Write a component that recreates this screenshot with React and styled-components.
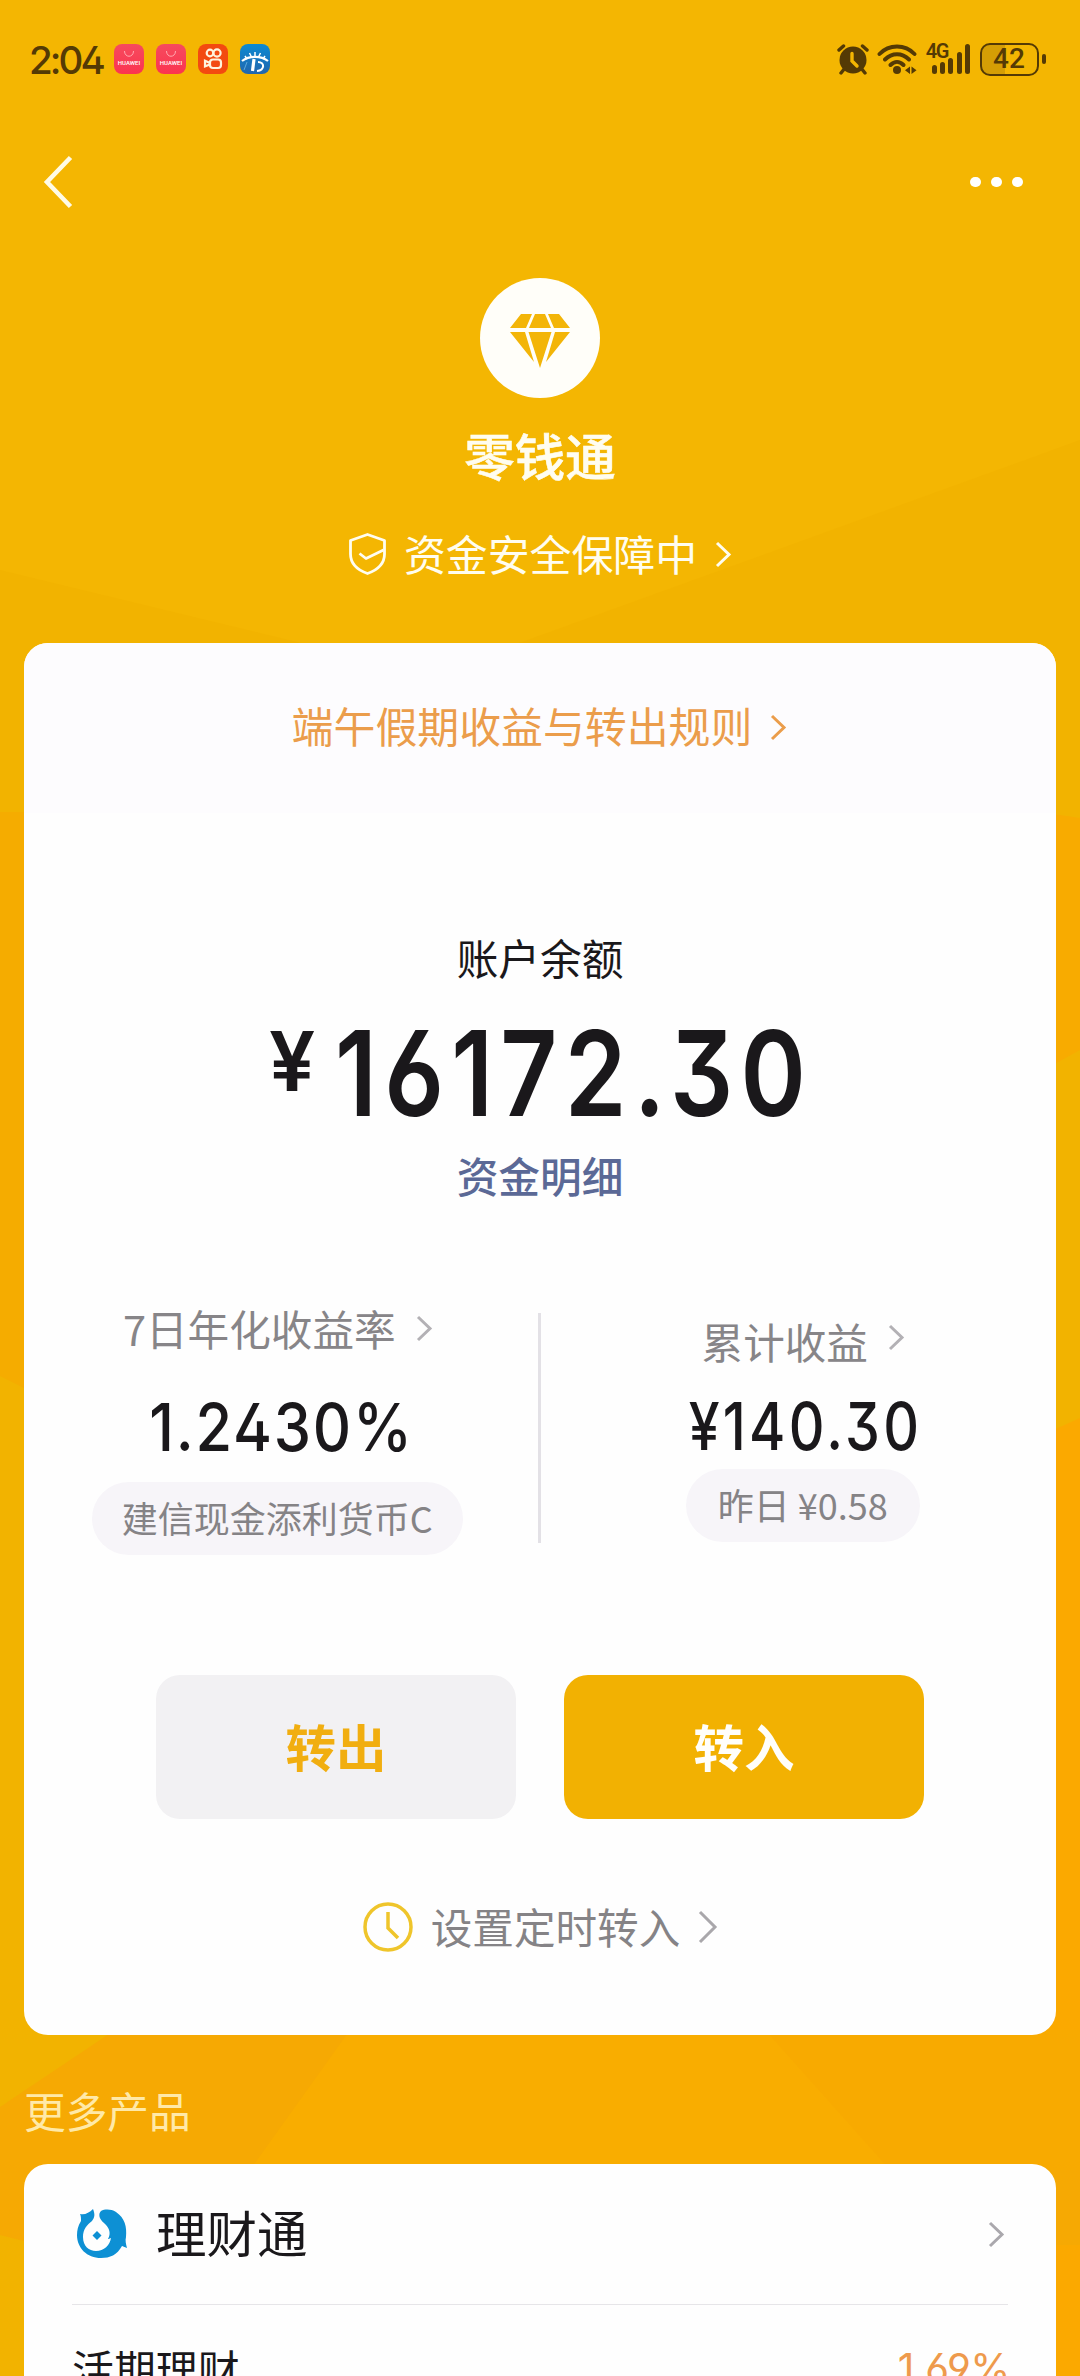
import React from "react";
import styled, { createGlobalStyle } from "styled-components";

const cjk = `"Noto Sans CJK SC", sans-serif`;
const digits = `Inter, "Noto Sans CJK SC", sans-serif`;

const GlobalStyle = createGlobalStyle`
  *, *::before, *::after { box-sizing: border-box; }
  body { margin: 0; background: #f4b602; font-family: ${cjk}; overflow: hidden; }
`;

const Screen = styled.main`
  position: relative;
  isolation: isolate;
  width: 1080px;
  height: 2376px;
  overflow: hidden;
  display: flex;
  flex-direction: column;
  color: #1a181b;
`;

const Backdrop = styled.svg`
  position: absolute;
  inset: 0;
  z-index: -1;
`;

const StatusBar = styled.header`
  display: flex;
  flex: none;
  align-items: center;
  height: 118px;
  padding: 0 34px 0 30px;
  color: #543a05;
`;

const Time = styled.span`
  font-family: ${digits};
  font-size: 38.5px;
  font-weight: 500;
  line-height: 40px;
  width: 85px;
  margin-left: -1px;
  padding-top: 2px;
  letter-spacing: -2.9px;
  font-feature-settings: "cv02";
  white-space: nowrap;
`;

const AppIcons = styled.div`
  display: flex;
  gap: 12px;
`;

const AppIcon = styled.div`
  display: flex;
  flex-direction: column;
  align-items: center;
  justify-content: center;
  width: 30px;
  height: 30px;
  border-radius: 8px;
  overflow: hidden;
  color: #fff;
  background: ${(p) => p.$bg};
`;

const BrandLabel = styled.span`
  font: 500 6px/8px Roboto, sans-serif;
  margin-top: 1px;
`;

const StatusIcons = styled.div`
  display: flex;
  align-items: center;
  margin-left: auto;
`;

const WifiIcon = styled.svg`
  margin-left: 8px;
`;

const Signal = styled.div`
  display: flex;
  align-items: flex-end;
  position: relative;
  gap: 3.3px;
  height: 30px;
  margin: 0 10px 0 15px;
`;

const Network = styled.span`
  position: absolute;
  left: -6px;
  top: -2px;
  font: 600 20px/18px Roboto, sans-serif;
  letter-spacing: -1.6px;
`;

const Bar = styled.i`
  width: 5px;
  height: ${(p) => p.$h}px;
  border-radius: 2.5px;
  background: currentColor;
`;

const Battery = styled.div`
  display: flex;
  align-items: center;
  justify-content: center;
  width: 59px;
  height: 33px;
  border: 2.5px solid currentColor;
  border-radius: 10px;
  background: linear-gradient(90deg, #d59e05 42%, transparent 42%);
  font: 500 28px/28px Roboto, sans-serif;
  padding-right: 1px;
`;

const BatteryTip = styled.i`
  width: 4px;
  height: 10px;
  margin-left: 3px;
  border-radius: 2px;
  background: currentColor;
`;

const NavBar = styled.nav`
  display: flex;
  flex: none;
  align-items: center;
  justify-content: space-between;
  height: 128px;
  padding: 0 57px 0 43px;
`;

const Dots = styled.div`
  display: flex;
  gap: 10.4px;
`;

const Dot = styled.i`
  width: 10.6px;
  height: 10.6px;
  border-radius: 50%;
  background: #fff;
`;

const Hero = styled.section`
  display: flex;
  flex: none;
  flex-direction: column;
  align-items: center;
  height: 397px;
  padding-top: 32px;
  color: #fffdf0;
`;

const Emblem = styled.div`
  display: flex;
  align-items: center;
  justify-content: center;
  width: 120px;
  height: 120px;
  padding-top: 5px;
  border-radius: 50%;
  background: #fffef9;
`;

const Title = styled.h1`
  margin: 20px 0 0;
  font-size: 50.5px;
  font-weight: 500;
  line-height: 72px;
  -webkit-text-stroke: 0.6px currentColor;
`;

const SafetyLink = styled.div`
  display: flex;
  align-items: center;
  height: 60px;
  margin-top: 34px;
  font-size: 41.9px;
  line-height: 60px;
`;

const SafetyText = styled.span`
  margin: 0 19px 3px 18px;
`;

const Card = styled.section`
  display: flex;
  flex-direction: column;
  align-items: center;
  flex: none;
  width: 1032px;
  height: ${(p) => p.$h}px;
  margin: 0 auto;
  border-radius: 24px;
  background: #fefefe;
  overflow: hidden;
`;

const Notice = styled.div`
  display: flex;
  align-items: center;
  justify-content: center;
  gap: 19px;
  width: 100%;
  height: 170px;
  padding: 0 2px 2px 0;
  background: #fdfcfe;
  color: #eb9d4b;
  font-size: 41.9px;
`;

const NoticeText = styled.span`
  margin-bottom: 4px;
  line-height: 60px;
`;

const BalanceLabel = styled.div`
  margin-top: 114px;
  font-size: 41.7px;
  line-height: 60px;
`;

const Balance = styled.div`
  display: flex;
  align-items: flex-start;
  width: 100%;
  height: 110px;
  margin-top: 31px;
  padding-left: 245px;
  font-family: ${digits};
  font-weight: 600;
`;

const Yen = styled.span`
  flex: none;
  width: 66px;
  font-size: 82px;
  line-height: 88px;
`;

const Amount = styled.span`
  font-size: 118px;
  line-height: 110px;
  letter-spacing: 8.6px;
  font-feature-settings: "cv03", "cv04", "cv09";
  transform: scaleX(0.84);
  transform-origin: left;
`;

const DetailLink = styled.a`
  margin-top: 17px;
  color: #5b6996;
  font-size: 41.7px;
  font-weight: 500;
  line-height: 60px;
`;

const Stats = styled.div`
  display: flex;
  width: 100%;
  height: 230px;
  margin-top: 108px;
`;

const Stat = styled.div`
  display: flex;
  flex: 1;
  flex-direction: column;
  align-items: center;
  padding: ${(p) => p.$pad};
`;

const Divider = styled.i`
  width: 3px;
  height: 230px;
  background: #e3e1e6;
`;

const StatLabel = styled.div`
  display: flex;
  align-items: center;
  gap: 21px;
  height: 60px;
  margin-top: ${(p) => p.$top}px;
  color: #878588;
  font-size: 41.6px;
  line-height: 60px;

  svg {
    margin-bottom: ${(p) => p.$lift || 0}px;
  }
`;

const StatValue = styled.div`
  height: 70px;
  margin-top: ${(p) => p.$top}px;
  padding-left: ${(p) => p.$shift}px;
  font-family: ${digits};
  font-size: 66px;
  line-height: 70px;
  white-space: nowrap;
  font-weight: ${(p) => p.$weight};
  letter-spacing: ${(p) => p.$spacing}px;
  font-feature-settings: ${(p) => p.$features};
  transform: scaleX(${(p) => p.$sx});
`;

const Pill = styled.div`
  flex: none;
  width: ${(p) => p.$w}px;
  height: 73px;
  margin-top: ${(p) => p.$top}px;
  border-radius: 37px;
  background: #f7f5f9;
  color: #858386;
  font-size: 36px;
  line-height: 71px;
  text-align: center;
  white-space: nowrap;
`;

const Actions = styled.div`
  display: flex;
  gap: 48px;
  margin-top: 132px;
`;

const Button = styled.button`
  width: 360px;
  height: 144px;
  border: 0;
  border-radius: 24px;
  padding: 0 0 4px;
  background: ${(p) => (p.$primary ? "#f2b102" : "#f2f1f3")};
  color: ${(p) => (p.$primary ? "#fffefa" : "#f1ae10")};
  font: 700 50.5px/72px ${cjk};
`;

const Schedule = styled.div`
  display: flex;
  align-items: center;
  height: 60px;
  margin-top: 78px;
  color: #858386;
  font-size: 41.6px;
  line-height: 60px;
`;

const ScheduleText = styled.span`
  margin: 0 19px 3px 18px;
`;

const SectionTitle = styled.h2`
  flex: none;
  height: 129px;
  margin: 0;
  padding: 45px 0 0 24px;
  color: #ffe9a8;
  font-size: 41.7px;
  font-weight: 400;
  line-height: 60px;
`;

const Row = styled.div`
  display: flex;
  align-items: center;
  flex: none;
  width: 936px;
  height: ${(p) => p.$h}px;
  border-bottom: ${(p) => (p.$line ? "1.5px solid #e6e5e8" : "none")};
  padding: ${(p) => p.$pad};
`;

const ProductName = styled.span`
  flex: 1;
  margin: 0 0 6px 28px;
  font-size: 50.5px;
  line-height: 72px;
`;

const PlanName = styled.span`
  flex: 1;
  font-size: 41.9px;
  line-height: 60px;
`;

const Rate = styled.span`
  margin-right: -2px;
  font-family: ${digits};
  font-size: 41px;
  line-height: 60px;
  color: #ee9a4c;
  font-feature-settings: "cv03", "cv04";
  letter-spacing: -0.5px;
`;

function Chevron({ w = 15, h = 25, color = "currentColor", sw = 3 }) {
  return (
    <svg width={w} height={h} viewBox={`0 0 ${w} ${h}`} fill="none" stroke={color} strokeWidth={sw} overflow="visible">
      <path d={`M1 1 L${w - 2} ${h / 2} L1 ${h - 1}`} />
    </svg>
  );
}

function Facets() {
  return (
    <Backdrop width="1080" height="2376" viewBox="0 0 1080 2376">
      <rect width="1080" height="2376" fill="#f4b602" />
      <path d="M0 570 L330 650 V2376 H0 Z" fill="#f2b300" />
      <path d="M1080 440 L500 650 V2376 H1080 Z" fill="#f2b300" />
      <path d="M0 812 H40 V1396 L0 1376 Z" fill="#f5ac00" />
      <path d="M1040 812 L1080 818 V1050 L1040 1072 Z" fill="#f8ab00" />
      <path d="M1040 1436 L1080 1418 V2376 H1040 Z" fill="#fba900" />
      <path d="M115 2030 L0 2107 V2235 L40 2245 H1080 V2030 Z" fill="#f6a903" />
      <path d="M350 2030 L250 2170 H1080 V2030 Z" fill="#f9ad00" />
      <path d="M765 2030 L890 2170 H1080 V2030 Z" fill="#f8aa00" />
    </Backdrop>
  );
}

function HuaweiIcon() {
  return (
    <AppIcon $bg="linear-gradient(#f64b5e, #fb3450)">
      <svg width="12" height="7" viewBox="0 0 12 7" fill="none" stroke="#ffa9b0">
        <path d="M1.5 0 C1.5 7 10.5 7 10.5 0" />
      </svg>
      <BrandLabel>HUAWEI</BrandLabel>
    </AppIcon>
  );
}

export default function App() {
  return (
    <Screen>
      <GlobalStyle />
      <Facets />
      <StatusBar>
        <Time>2:04</Time>
        <AppIcons>
          <HuaweiIcon />
          <HuaweiIcon />
          <AppIcon $bg="#f34a10">
            <svg width="20" height="22" viewBox="0 0 20 22" fill="none" stroke="#fff3dc" strokeWidth="2.2">
              <circle cx="7" cy="5" r="3.3" />
              <circle cx="14" cy="5" r="3.6" />
              <rect x="7" y="11.5" width="11" height="8.5" rx="3" />
              <path d="M7 15 L2 12.8 V18.4 L7 16.5" />
            </svg>
          </AppIcon>
          <AppIcon $bg="linear-gradient(#0d8ad2, #2166ae)">
            <svg width="30" height="30" viewBox="0 0 30 30" fill="none" stroke="#fff" strokeWidth="2">
              <path d="M2 17 C9 11.5 21 11.5 28 17" strokeWidth="2.2" />
              <path d="M15 8 V12 M9.5 9 L11.5 13 M20.5 9 L18.5 13 M5 12 L7 15 M25 12 L23 15" strokeWidth="1.5" />
              <path d="M14 15 L12.5 27" strokeWidth="3.2" />
              <path d="M18 18 C25 18 25 26 17 27" strokeWidth="2" />
              <path d="M7 18 L4 26" strokeWidth="1" stroke="#5ea8dc" />
            </svg>
          </AppIcon>
        </AppIcons>
        <StatusIcons>
          <svg width="32" height="31" viewBox="0 0 32 31" fill="none" stroke="currentColor" strokeLinecap="round">
            <circle cx="16" cy="16" r="13.5" fill="currentColor" stroke="none" />
            <path d="M2 6 L6.5 2 M30 6 L25.5 2 M4 29 L8 24 M28 29 L24 24" strokeWidth="3.4" />
            <path d="M15 9.500 V17 L20 22" stroke="#f4b602" strokeWidth="3.4" />
          </svg>
          <WifiIcon width="40" height="31" viewBox="0 0 40 31" fill="none" stroke="currentColor" strokeWidth="3.9" strokeLinecap="round">
            <path d="M2.5 10 C12 0 28 0 37.5 10 M8 15.5 C15 8.5 25 8.5 32 15.5 M13.5 21 C17.5 17 22.5 17 26.5 21" />
            <circle cx="20" cy="26" r="4" fill="currentColor" stroke="none" />
            <path d="M33 22.5 V30 L28 26.2 Z M34.5 22.5 V30 L39.5 26.2 Z" fill="currentColor" stroke="none" />
          </WifiIcon>
          <Signal>
            <Network>4G</Network>
            <Bar $h={9} />
            <Bar $h={12} />
            <Bar $h={16} />
            <Bar $h={22} />
            <Bar $h={30} />
          </Signal>
          <Battery>42</Battery>
          <BatteryTip />
        </StatusIcons>
      </StatusBar>

      <NavBar>
        <svg width="30" height="54" viewBox="0 0 30 54" fill="none" stroke="#fffbe6" strokeWidth="4.6">
          <path d="M27.5 2.5 L4 27 L27.5 51.5" />
        </svg>
        <Dots>
          <Dot />
          <Dot />
          <Dot />
        </Dots>
      </NavBar>

      <Hero>
        <Emblem>
          <svg width="60" height="54" viewBox="0 0 60 54" fill="#f3b508">
            <path d="M11 0 H22 L16 14 H0 Z M25 0 H35 L41 14 H19 Z M38 0 H49 L60 14 H44 Z" />
            <path d="M0 18 H15 L24 48 Z M18.5 18 H41.5 L30 54 Z M45 18 H60 L36 48 Z" />
          </svg>
        </Emblem>
        <Title>零钱通</Title>
        <SafetyLink>
          <svg width="37" height="42" viewBox="0 0 37 42" fill="none" stroke="currentColor" strokeWidth="2.8" strokeLinejoin="round">
            <path d="M18.5 1.5 L35.5 7.5 V21 C35.5 32 27 37.5 18.5 40.5 C10 37.5 1.5 32 1.5 21 V7.5 Z" />
            <path d="M10.5 20.5 L17 25.5 L34.5 17" />
          </svg>
          <SafetyText>资金安全保障中</SafetyText>
          <Chevron />
        </SafetyLink>
      </Hero>

      <Card $h={1392}>
        <Notice>
          <NoticeText>端午假期收益与转出规则</NoticeText>
          <Chevron />
        </Notice>
        <BalanceLabel>账户余额</BalanceLabel>
        <Balance>
          <Yen>¥</Yen>
          <Amount>16172.30</Amount>
        </Balance>
        <DetailLink>资金明细</DetailLink>
        <Stats>
          <Stat $pad="0 7px 0 0">
            <StatLabel $top={-15}>
              <span>7日年化收益率</span>
              <Chevron color="#b3b1b5" />
            </StatLabel>
            <StatValue $top={34} $sx={0.9} $weight={450} $spacing={2} $shift={10} $features={`"cv02"`}>1.2430%</StatValue>
            <Pill $w={371} $top={20}>建信现金添利货币C</Pill>
          </Stat>
          <Divider />
          <Stat $pad="0 0 0 9px">
            <StatLabel $top={-2} $lift={7}>
              <span>累计收益</span>
              <Chevron color="#b3b1b5" />
            </StatLabel>
            <StatValue $top={20} $sx={0.84} $weight={500} $spacing={3.9} $shift={7} $features={`"cv09"`}>¥140.30</StatValue>
            <Pill $w={234} $top={8}>昨日 ¥0.58</Pill>
          </Stat>
        </Stats>
        <Actions>
          <Button>转出</Button>
          <Button $primary>转入</Button>
        </Actions>
        <Schedule>
          <svg width="50" height="50" viewBox="0 0 50 50" fill="none" stroke="#efc52b" strokeWidth="3.5">
            <circle cx="25" cy="25" r="23" />
            <path d="M25 10 V26 L35 36" />
          </svg>
          <ScheduleText>设置定时转入</ScheduleText>
          <Chevron w={18} h={32} color="#a9a7ab" />
        </Schedule>
      </Card>

      <SectionTitle>更多产品</SectionTitle>

      <Card $h={300}>
        <Row $h={141} $line $pad="0 4px 0 5px">
          <svg width="51" height="50" viewBox="0 0 51 50">
            <path fill="#0d90d4" d="M3 5 C8 6 12 4 16 0 C18 5 18 8 15 12 C10 16 6 20 6 28 C6 37 12 42 19 42 C27 42 33 36 34 29 C32 30 31 30 31 30 C34 25 33 19 27 14 C22 10 21 5 24 2 C28 0 34 0 39 3 C48 9 50 18 49 28 C48 32 49 35 50 39 C47 38 46 37 45 37 C40 46 33 49 24 49 C10 49 0 39 0 26 C0 21 1 17 4 12 C4 9 4 7 3 5 Z" />
            <path fill="#0d90d4" d="M20 22 L24.5 26.5 L20 31 L15.5 26.5 Z" />
          </svg>
          <ProductName>理财通</ProductName>
          <Chevron color="#aaa8ad" />
        </Row>
        <Row $h={119} $pad="6px 0 0">
          <PlanName>活期理财</PlanName>
          <Rate>1.69%</Rate>
        </Row>
      </Card>
    </Screen>
  );
}
